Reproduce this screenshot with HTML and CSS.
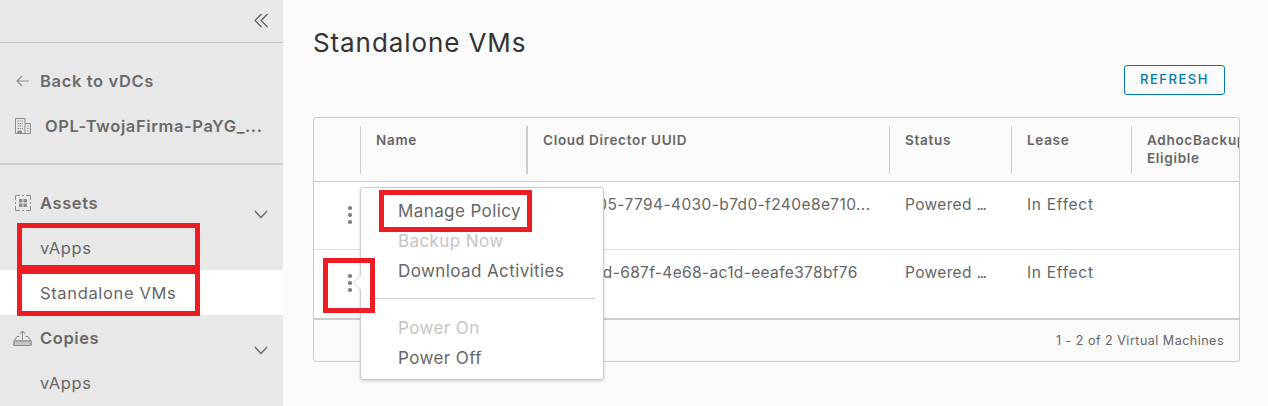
FILE: index.html
```html
<!DOCTYPE html>
<html lang="en">
<head>
<meta charset="utf-8">
<title>Standalone VMs</title>
<link rel="stylesheet" href="styles.css">
</head>
<body>
<div class="app">
  <aside class="side">
    <div class="side-top">
      <svg class="collapse" width="14" height="15" viewBox="0 0 14 15"><path d="M7.500 1 1 7.500 7.500 14M13.500 1 7 7.500 13.500 14" fill="none" stroke="#555" stroke-width="1.100"/></svg>
    </div>
    <div class="side-block">
      <a class="back"><svg width="16" height="12" viewBox="0 0 16 12"><path d="M14 6H2M7 1 2 6l5 5" fill="none" stroke="#8c8c8c" stroke-width="1.100"/></svg><span>Back to vDCs</span></a>
      <div class="org">
        <svg width="16" height="16" viewBox="0 0 16 16" fill="none" stroke="#8c8c8c"><path d="M.5 15.500V.5h9.500v15M10 5.500h5.500v10M.5 15.500h15"/><path d="M2.500 3h5.500M2.500 5.500h5.500M2.500 8h5.500M2.500 10.500h5.500M12 8h2M12 10.500h2M12 13h2" stroke-dasharray="1.500 .8"/><path d="M3 15.500V13h3.500v2.500" fill="#8c8c8c"/></svg>
        <span>OPL-TwojaFirma-PaYG_...</span>
      </div>
    </div>
    <nav class="nav">
      <div class="group">
        <svg width="16" height="16" viewBox="0 0 16 16" fill="none" stroke="#8c8c8c"><path d="M5 .5H.5V5M11 .5h4.500V5M5 15.500H.5V11M11 15.500h4.500V11M7 .5h2M7 15.500h2M.5 7v2M15.500 7v2"/><path d="M4 4h3.500v3.500H4zM8.500 4H12v3.500H8.500zM4 8.500h3.500V12H4zM8.500 8.500H12V12H8.500z" fill="#8c8c8c" stroke="none"/></svg>
        <span class="group-label">Assets</span>
        <svg class="chev" width="14" height="9" viewBox="0 0 14 9"><path d="M1 1l6 6.500L13 1" fill="none" stroke="#666" stroke-width="1.300"/></svg>
      </div>
      <a class="item">vApps</a>
      <a class="item active">Standalone VMs</a>
      <div class="group copies">
        <svg width="19" height="17" viewBox="0 0 19 17" fill="none" stroke="#8c8c8c"><path d="M9.500 10V1M6.500 4l3-3 3 3M6.500 6.500H4L1 11v4.500h17V11l-3-4.500h-2.500M1 11h17"/><path d="M1 11h17v4.500H1z" fill="#c4c4c4"/></svg>
        <span class="group-label">Copies</span>
        <svg class="chev" width="14" height="9" viewBox="0 0 14 9"><path d="M1 1l6 6.500L13 1" fill="none" stroke="#666" stroke-width="1.300"/></svg>
      </div>
      <a class="item">vApps</a>
    </nav>
  </aside>
  <main class="main">
    <h1 class="title">Standalone VMs</h1>
    <div class="actions"><button class="btn">REFRESH</button></div>
    <section class="grid">
      <div class="row head">
        <div class="cell c0"></div>
        <div class="cell c1 thick">Name</div>
        <div class="cell c2">Cloud Director UUID</div>
        <div class="cell c3">Status</div>
        <div class="cell c4">Lease</div>
        <div class="cell c5">AdhocBackup<br>Eligible</div>
      </div>
      <div class="row body">
        <div class="cell c0"><span class="dots"><i></i><i></i><i></i></span></div>
        <div class="cell c1"></div>
        <div class="cell c2 data wide">5c6a9f05-7794-4030-b7d0-f240e8e710...</div>
        <div class="cell c3 data">Powered <span class="ell">...</span></div>
        <div class="cell c4 data lease">In Effect</div>
        <div class="cell c5"></div>
      </div>
      <div class="row body">
        <div class="cell c0"><span class="dots"><i></i><i></i><i></i></span></div>
        <div class="cell c1"></div>
        <div class="cell c2 data">1f7e4cbd-687f-4e68-ac1d-eeafe378bf76</div>
        <div class="cell c3 data">Powered <span class="ell">...</span></div>
        <div class="cell c4 data lease">In Effect</div>
        <div class="cell c5"></div>
      </div>
      <div class="foot">1 - 2 of 2 Virtual Machines</div>
    </section>
  </main>
</div>

<div class="menu">
  <span class="caret"></span>
  <div class="mi">Manage Policy</div>
  <div class="mi off">Backup Now</div>
  <div class="mi">Download Activities</div>
  <div class="sep"></div>
  <div class="mi off">Power On</div>
  <div class="mi">Power Off</div>
</div>

<div class="mark m-vapps"></div>
<div class="mark m-vms"></div>
<div class="mark m-dots"></div>
<div class="mark m-policy"></div>
</body>
</html>
```
FILE: styles.css
```css
* { box-sizing: border-box; }
html, body { margin: 0; height: 406px; overflow: hidden; }
body { font-family: "Inter", "Open Sans", "Liberation Sans", sans-serif; color: #666; position: relative; background: #fafafa; }
.app { display: flex; height: 406px; }

.side { width: 283px; flex: none; background: #e8e8e8; }
.side-top { height: 43px; border-bottom: 1px solid #c8c8c8; display: flex; justify-content: flex-end; align-items: center; padding: 0 15px 2px 0; }
.side-block { height: 122px; border-bottom: 2px solid #cccccc; padding: 28px 0 0 15px; }
.back { display: flex; align-items: center; gap: 9px; height: 20px; font-size: 16.500px; font-weight: 600; letter-spacing: .65px; color: #6a6a6a; }
.org { display: flex; align-items: center; gap: 14px; margin-top: 25px; height: 20px; font-size: 16.500px; font-weight: 600; letter-spacing: .6px; color: #6a6a6a; }
.nav { padding-top: 28px; }
.group { display: flex; align-items: center; height: 20px; padding: 0 15px; font-size: 16.500px; font-weight: 600; position: relative; color: #6a6a6a; }
.group-label { margin-left: 9px; letter-spacing: .6px; }
.chev { position: absolute; right: 15px; top: 17px; }
.copies { margin-top: 13px; padding-left: 13px; }
.copies .group-label { margin-left: 8px; }
.copies .chev { top: 18px; }
.item { display: flex; align-items: center; height: 45px; padding-left: 40px; font-size: 16.500px; font-weight: 400; letter-spacing: .65px; }
.group + .item { margin-top: 12px; margin-bottom: 0; }
.item.active { background: #fff; }
.copies + .item { margin-top: 12px; }

.main { flex: 1; min-width: 0; padding: 0 28px 0 30px; }
.title { margin: 0; padding-top: 27px; font-size: 26px; line-height: 32px; font-weight: 400; color: #333; letter-spacing: .9px; }
.actions { display: flex; justify-content: flex-end; margin-top: 6px; padding-right: 15px; }
.btn { width: 101px; height: 30px; background: transparent; border: 1px solid #0079ad; border-radius: 3px; color: #0079ad; font: 500 13px "Inter", "Open Sans", sans-serif; letter-spacing: 1.500px; padding: 0 0 2px; }
.grid { margin-top: 22px; height: 245px; border: 1px solid #ccc; border-radius: 3px; overflow: hidden; }
.row { display: flex; overflow: hidden; }
.head { height: 64px; padding-top: 8px; border-bottom: 1px solid #ccc; font-size: 13.500px; font-weight: 600; line-height: 18px; letter-spacing: .7px; }
.head .cell { height: 48px; padding: 5px 0 0 15px; border-left: 1px solid #ccc; }
.head .c0 { border-left: 0; }
.head .thick { border-right: 2px solid #ccc; }
.head .c2 { border-left: 0; }
.body { height: 68px; background: #fff; border-bottom: 1px solid #ddd; font-size: 15.500px; }
.body:nth-child(3) { height: 70px; border-bottom: 2px solid #ccc; }
.body .cell { padding: 13px 0 0 15px; white-space: nowrap; overflow: hidden; }
.body .c3, .body .c4 { padding-left: 16px; }
.c0 { width: 46px; flex: none; }
.c1 { width: 168px; flex: none; }
.c2 { width: 361px; flex: none; }
.c3 { width: 122px; flex: none; }
.c4 { width: 120px; flex: none; }
.c5 { flex: 1; white-space: nowrap; }
.data { color: #666; letter-spacing: .35px; }
.data.wide { letter-spacing: .4px; }
.data.lease { letter-spacing: .7px; }
.ell { letter-spacing: -1.500px; }
.body .c0 { padding: 24px 0 0 34px; }
.dots { display: flex; flex-direction: column; gap: 3.500px; width: 4px; }
.dots i { width: 3.500px; height: 3.500px; border-radius: 50%; background: #808080; }
.foot { height: 40px; display: flex; align-items: center; justify-content: flex-end; padding-right: 15px; font-size: 12.500px; color: #666; letter-spacing: .5px; }

.menu { position: absolute; left: 360px; top: 187px; width: 244px; height: 193px; background: #fff; border: 1px solid #ccc; border-radius: 3px; box-shadow: 0 1px 3px rgba(0,0,0,.18); padding: 8px 0 0 37px; font-size: 17px; }
.mi { height: 30px; line-height: 30px; color: #666; letter-spacing: .4px; }
.mi.off { color: #c4c4c4; }
.sep { height: 1px; background: #ccc; margin: 12px 8px 14px -29px; }
.caret { position: absolute; left: -6px; top: 89px; width: 11px; height: 11px; background: #fff; border-left: 1px solid #ddd; border-bottom: 1px solid #ddd; transform: rotate(45deg); }

.mark { position: absolute; border: 5px solid #ee1c25; }
.m-vapps { left: 17px; top: 223px; width: 183px; height: 47px; }
.m-vms { left: 17px; top: 269px; width: 183px; height: 47px; }
.m-dots { left: 323px; top: 258px; width: 52px; height: 55px; }
.m-policy { left: 379px; top: 190px; width: 153px; height: 42px; }
```
